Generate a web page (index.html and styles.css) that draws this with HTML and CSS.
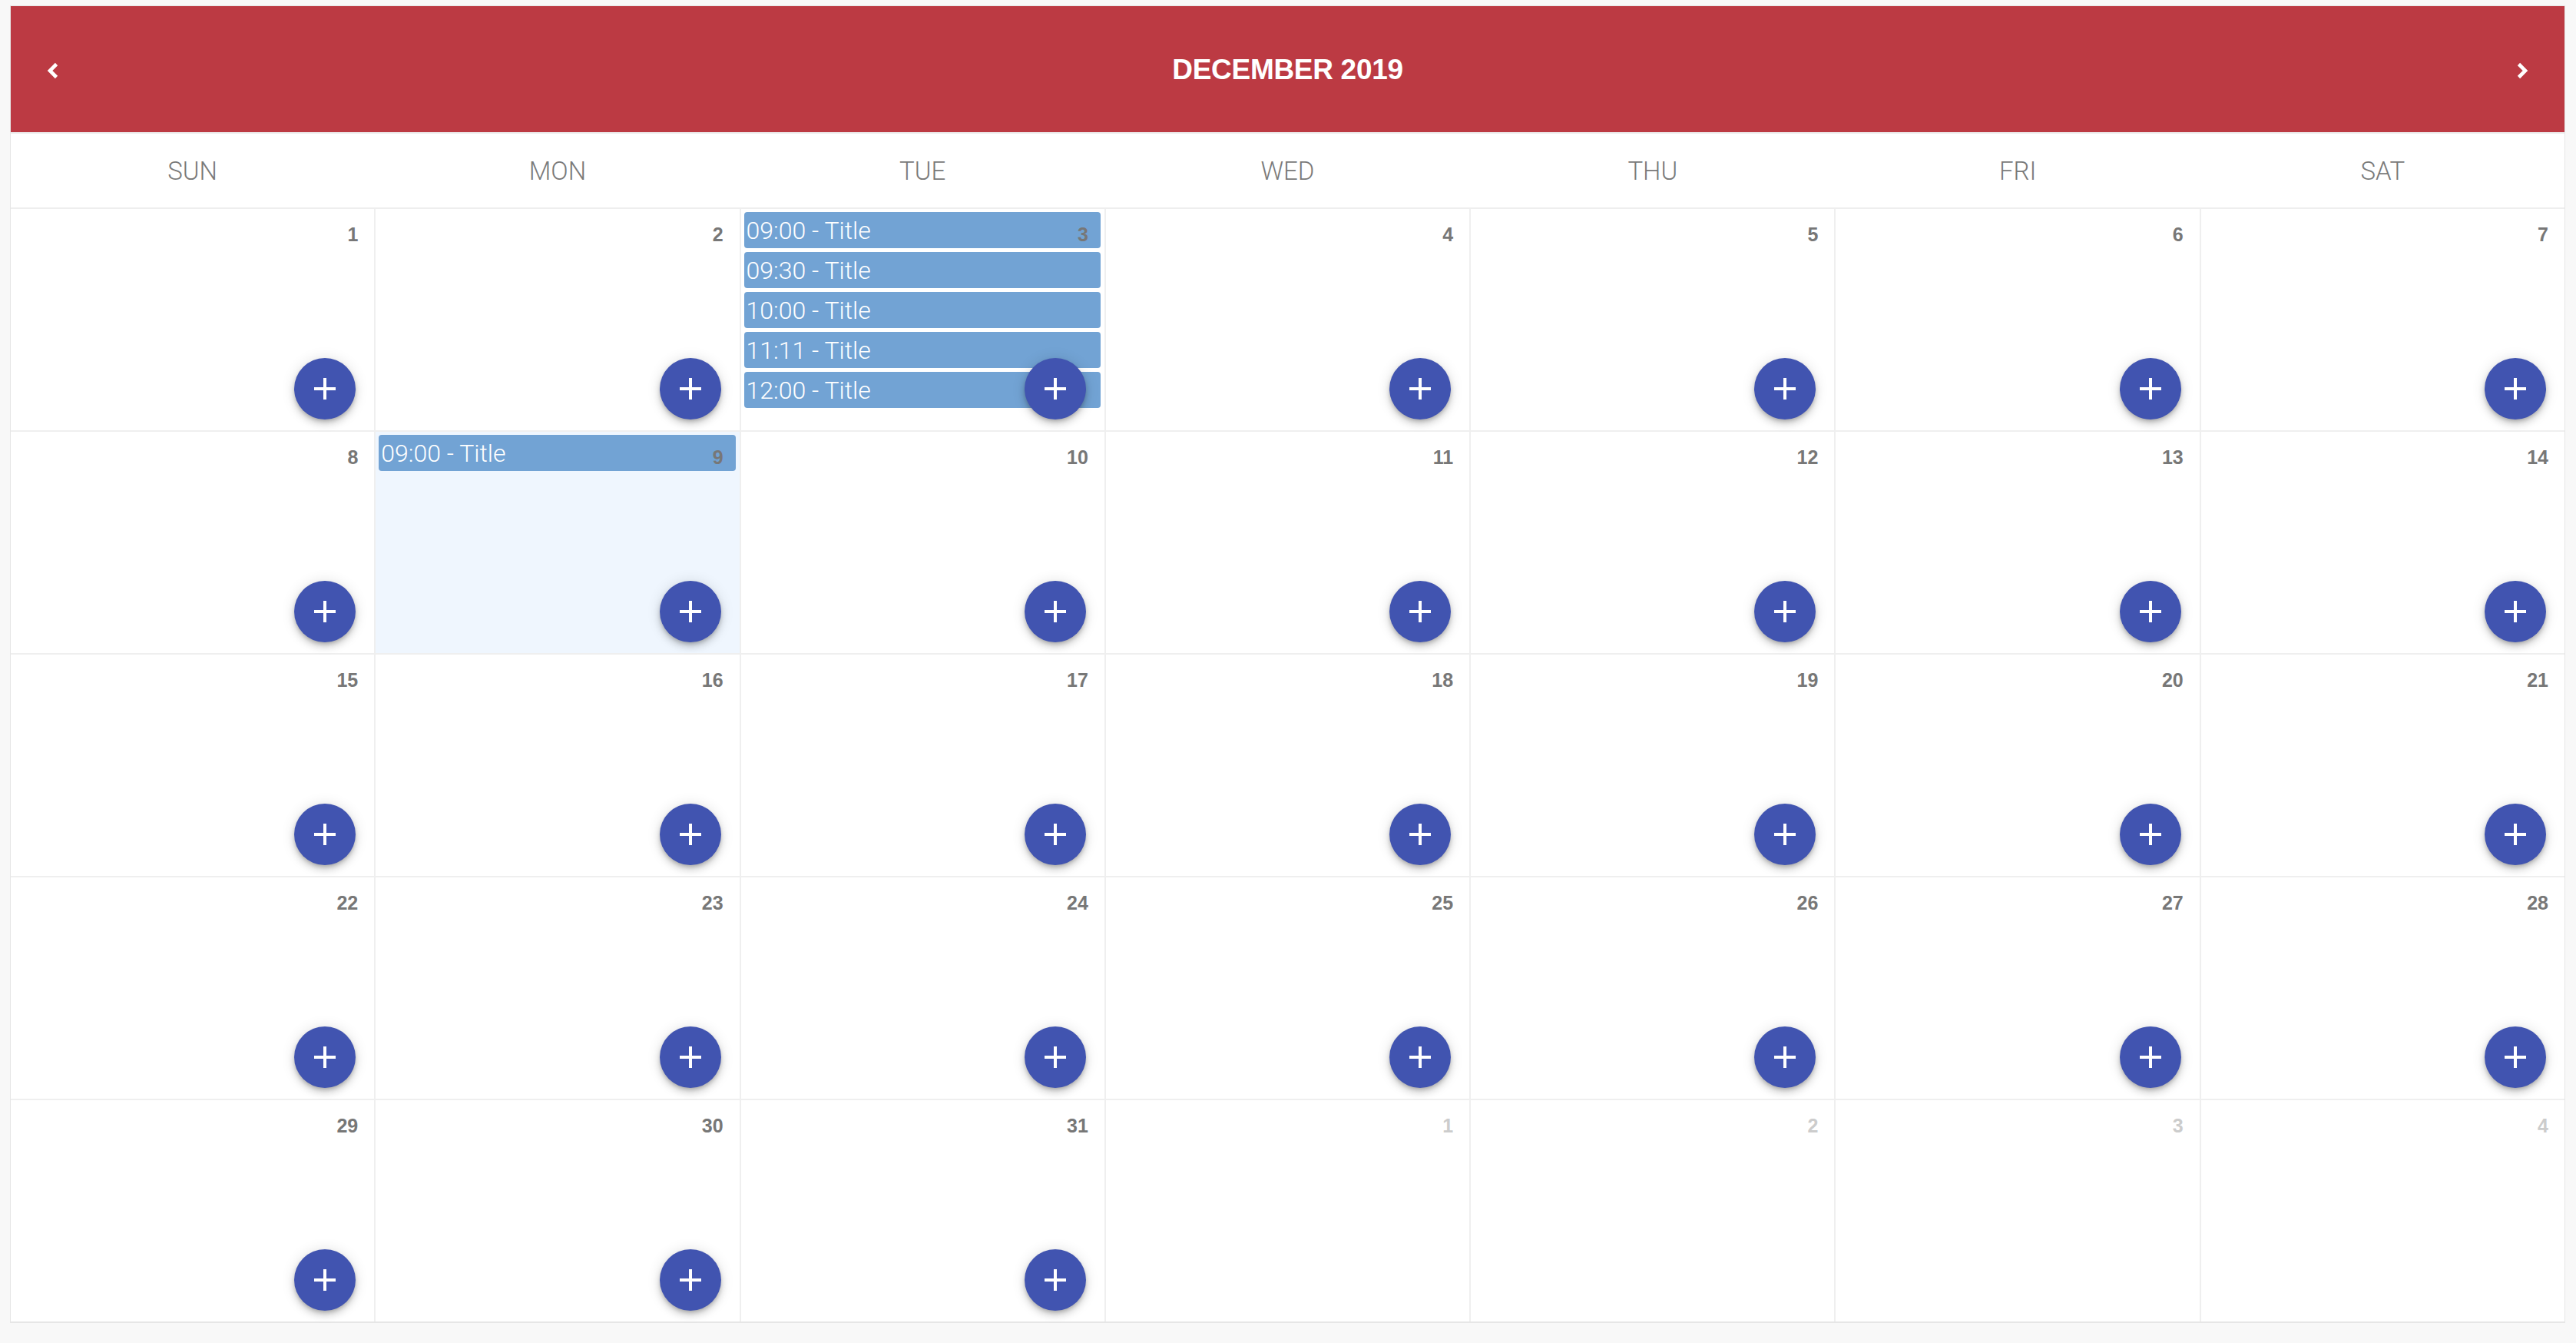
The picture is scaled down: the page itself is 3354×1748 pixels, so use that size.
FILE: index.html
```html
<!DOCTYPE html>
<html lang="en">
<head>
<meta charset="utf-8">
<title>December 2019</title>
<link rel="stylesheet" href="styles.css">
</head>
<body>
<div class="calendar">
  <header class="cal-header">
    <button class="nav" aria-label="Previous month">
      <svg width="16" height="22" viewBox="0 0 16 22"><polyline points="12.5,2.5 4,11 12.5,19.5" fill="none" stroke="#fff" stroke-width="4.6"/></svg>
    </button>
    <h1 class="title">DECEMBER 2019</h1>
    <button class="nav" aria-label="Next month">
      <svg width="16" height="22" viewBox="0 0 16 22"><polyline points="3.5,2.5 12,11 3.5,19.5" fill="none" stroke="#fff" stroke-width="4.6"/></svg>
    </button>
  </header>
  <div class="weekdays">
    <div class="wd">SUN</div><div class="wd">MON</div><div class="wd">TUE</div><div class="wd">WED</div><div class="wd">THU</div><div class="wd">FRI</div><div class="wd">SAT</div>
  </div>
  <div class="grid">
    <div class="cell"><span class="num">1</span><button class="add"><svg viewBox="0 0 24 24"><path d="M19 13h-6v6h-2v-6H5v-2h6V5h2v6h6v2z"/></svg></button></div>
    <div class="cell"><span class="num">2</span><button class="add"><svg viewBox="0 0 24 24"><path d="M19 13h-6v6h-2v-6H5v-2h6V5h2v6h6v2z"/></svg></button></div>
    <div class="cell"><span class="num">3</span>
      <ul class="events">
        <li class="event">09:00 - Title</li>
        <li class="event">09:30 - Title</li>
        <li class="event">10:00 - Title</li>
        <li class="event">11:11 - Title</li>
        <li class="event">12:00 - Title</li>
      </ul>
      <button class="add"><svg viewBox="0 0 24 24"><path d="M19 13h-6v6h-2v-6H5v-2h6V5h2v6h6v2z"/></svg></button></div>
    <div class="cell"><span class="num">4</span><button class="add"><svg viewBox="0 0 24 24"><path d="M19 13h-6v6h-2v-6H5v-2h6V5h2v6h6v2z"/></svg></button></div>
    <div class="cell"><span class="num">5</span><button class="add"><svg viewBox="0 0 24 24"><path d="M19 13h-6v6h-2v-6H5v-2h6V5h2v6h6v2z"/></svg></button></div>
    <div class="cell"><span class="num">6</span><button class="add"><svg viewBox="0 0 24 24"><path d="M19 13h-6v6h-2v-6H5v-2h6V5h2v6h6v2z"/></svg></button></div>
    <div class="cell"><span class="num">7</span><button class="add"><svg viewBox="0 0 24 24"><path d="M19 13h-6v6h-2v-6H5v-2h6V5h2v6h6v2z"/></svg></button></div>

    <div class="cell"><span class="num">8</span><button class="add"><svg viewBox="0 0 24 24"><path d="M19 13h-6v6h-2v-6H5v-2h6V5h2v6h6v2z"/></svg></button></div>
    <div class="cell selected"><span class="num">9</span>
      <ul class="events">
        <li class="event">09:00 - Title</li>
      </ul>
      <button class="add"><svg viewBox="0 0 24 24"><path d="M19 13h-6v6h-2v-6H5v-2h6V5h2v6h6v2z"/></svg></button></div>
    <div class="cell"><span class="num">10</span><button class="add"><svg viewBox="0 0 24 24"><path d="M19 13h-6v6h-2v-6H5v-2h6V5h2v6h6v2z"/></svg></button></div>
    <div class="cell"><span class="num">11</span><button class="add"><svg viewBox="0 0 24 24"><path d="M19 13h-6v6h-2v-6H5v-2h6V5h2v6h6v2z"/></svg></button></div>
    <div class="cell"><span class="num">12</span><button class="add"><svg viewBox="0 0 24 24"><path d="M19 13h-6v6h-2v-6H5v-2h6V5h2v6h6v2z"/></svg></button></div>
    <div class="cell"><span class="num">13</span><button class="add"><svg viewBox="0 0 24 24"><path d="M19 13h-6v6h-2v-6H5v-2h6V5h2v6h6v2z"/></svg></button></div>
    <div class="cell"><span class="num">14</span><button class="add"><svg viewBox="0 0 24 24"><path d="M19 13h-6v6h-2v-6H5v-2h6V5h2v6h6v2z"/></svg></button></div>

    <div class="cell"><span class="num">15</span><button class="add"><svg viewBox="0 0 24 24"><path d="M19 13h-6v6h-2v-6H5v-2h6V5h2v6h6v2z"/></svg></button></div>
    <div class="cell"><span class="num">16</span><button class="add"><svg viewBox="0 0 24 24"><path d="M19 13h-6v6h-2v-6H5v-2h6V5h2v6h6v2z"/></svg></button></div>
    <div class="cell"><span class="num">17</span><button class="add"><svg viewBox="0 0 24 24"><path d="M19 13h-6v6h-2v-6H5v-2h6V5h2v6h6v2z"/></svg></button></div>
    <div class="cell"><span class="num">18</span><button class="add"><svg viewBox="0 0 24 24"><path d="M19 13h-6v6h-2v-6H5v-2h6V5h2v6h6v2z"/></svg></button></div>
    <div class="cell"><span class="num">19</span><button class="add"><svg viewBox="0 0 24 24"><path d="M19 13h-6v6h-2v-6H5v-2h6V5h2v6h6v2z"/></svg></button></div>
    <div class="cell"><span class="num">20</span><button class="add"><svg viewBox="0 0 24 24"><path d="M19 13h-6v6h-2v-6H5v-2h6V5h2v6h6v2z"/></svg></button></div>
    <div class="cell"><span class="num">21</span><button class="add"><svg viewBox="0 0 24 24"><path d="M19 13h-6v6h-2v-6H5v-2h6V5h2v6h6v2z"/></svg></button></div>

    <div class="cell"><span class="num">22</span><button class="add"><svg viewBox="0 0 24 24"><path d="M19 13h-6v6h-2v-6H5v-2h6V5h2v6h6v2z"/></svg></button></div>
    <div class="cell"><span class="num">23</span><button class="add"><svg viewBox="0 0 24 24"><path d="M19 13h-6v6h-2v-6H5v-2h6V5h2v6h6v2z"/></svg></button></div>
    <div class="cell"><span class="num">24</span><button class="add"><svg viewBox="0 0 24 24"><path d="M19 13h-6v6h-2v-6H5v-2h6V5h2v6h6v2z"/></svg></button></div>
    <div class="cell"><span class="num">25</span><button class="add"><svg viewBox="0 0 24 24"><path d="M19 13h-6v6h-2v-6H5v-2h6V5h2v6h6v2z"/></svg></button></div>
    <div class="cell"><span class="num">26</span><button class="add"><svg viewBox="0 0 24 24"><path d="M19 13h-6v6h-2v-6H5v-2h6V5h2v6h6v2z"/></svg></button></div>
    <div class="cell"><span class="num">27</span><button class="add"><svg viewBox="0 0 24 24"><path d="M19 13h-6v6h-2v-6H5v-2h6V5h2v6h6v2z"/></svg></button></div>
    <div class="cell"><span class="num">28</span><button class="add"><svg viewBox="0 0 24 24"><path d="M19 13h-6v6h-2v-6H5v-2h6V5h2v6h6v2z"/></svg></button></div>

    <div class="cell"><span class="num">29</span><button class="add"><svg viewBox="0 0 24 24"><path d="M19 13h-6v6h-2v-6H5v-2h6V5h2v6h6v2z"/></svg></button></div>
    <div class="cell"><span class="num">30</span><button class="add"><svg viewBox="0 0 24 24"><path d="M19 13h-6v6h-2v-6H5v-2h6V5h2v6h6v2z"/></svg></button></div>
    <div class="cell"><span class="num">31</span><button class="add"><svg viewBox="0 0 24 24"><path d="M19 13h-6v6h-2v-6H5v-2h6V5h2v6h6v2z"/></svg></button></div>
    <div class="cell other"><span class="num">1</span></div>
    <div class="cell other"><span class="num">2</span></div>
    <div class="cell other"><span class="num">3</span></div>
    <div class="cell other"><span class="num">4</span></div>
  </div>
</div>
</body>
</html>
```

FILE: styles.css
```css
html, body {
  background: #f8f8f8;
}
body {
  margin: 7px 14px 0 13px;
  font-family: "Liberation Sans", Arial, sans-serif;
}
.calendar {
  border: 1px solid #e6e6e6;
  border-bottom-width: 2px;
  background: #fff;
}
.cal-header {
  height: 164px;
  background: #bc3a43;
  border-bottom: 2px solid #ececec;
  display: flex;
  align-items: center;
  justify-content: space-between;
  padding: 0 47px 0 47px;
}
.nav {
  background: none;
  border: 0;
  padding: 0;
  width: 16px;
  height: 22px;
  display: flex;
  margin-top: 4px;
}
.title {
  margin: 2px 0 0 0;
  color: #fff;
  font-family: "Liberation Sans", Arial, sans-serif;
  font-weight: 700;
  font-size: 37px;
  letter-spacing: -0.3px;
}
.weekdays {
  display: grid;
  grid-template-columns: repeat(7, 1fr);
  column-gap: 2px;
  height: 96px;
  border-bottom: 2px solid #eeeeee;
}
.wd {
  display: flex;
  align-items: center;
  justify-content: center;
  font-family: Roboto, "Noto Sans", sans-serif;
  font-weight: 300;
  font-size: 33px;
  color: #7a7a7a;
}
.grid {
  display: grid;
  grid-template-columns: repeat(7, 1fr);
  grid-template-rows: repeat(5, 288px);
  gap: 2px;
  background: #efefef;
}
.cell {
  background: #fff;
  display: grid;
  grid-template-columns: minmax(0, 1fr);
  grid-template-rows: minmax(0, 1fr);
}
.cell > * {
  grid-area: 1 / 1;
}
.cell.selected {
  background: #eff6fe;
}
.num {
  justify-self: end;
  align-self: start;
  margin: 18px 21px 0 0;
  font-family: "Liberation Sans", Arial, sans-serif;
  font-weight: 700;
  font-size: 25px;
  line-height: 30px;
  color: #777;
  z-index: 1;
}
.other .num {
  color: #cccccc;
}
.events {
  list-style: none;
  margin: 4px 5px 0 4px;
  padding: 0;
  align-self: start;
  display: flex;
  flex-direction: column;
  gap: 5px;
}
.event {
  height: 47px;
  background: #72a3d4;
  border-radius: 4px;
  color: #fff;
  font-family: Roboto, "Noto Sans", sans-serif;
  font-weight: 300;
  font-size: 32px;
  line-height: 49px;
  padding-left: 3px;
  white-space: nowrap;
}
.add {
  justify-self: end;
  align-self: end;
  margin: 0 24px 14px 0;
  width: 80px;
  height: 80px;
  border-radius: 50%;
  border: 0;
  padding: 0;
  background: #4154b0;
  display: flex;
  align-items: center;
  justify-content: center;
  box-shadow: 0 3px 5px -1px rgba(0,0,0,.2), 0 6px 10px 0 rgba(0,0,0,.14), 0 1px 18px 0 rgba(0,0,0,.12);
  z-index: 2;
}
.add svg {
  width: 48px;
  height: 48px;
  fill: #fff;
}
```
